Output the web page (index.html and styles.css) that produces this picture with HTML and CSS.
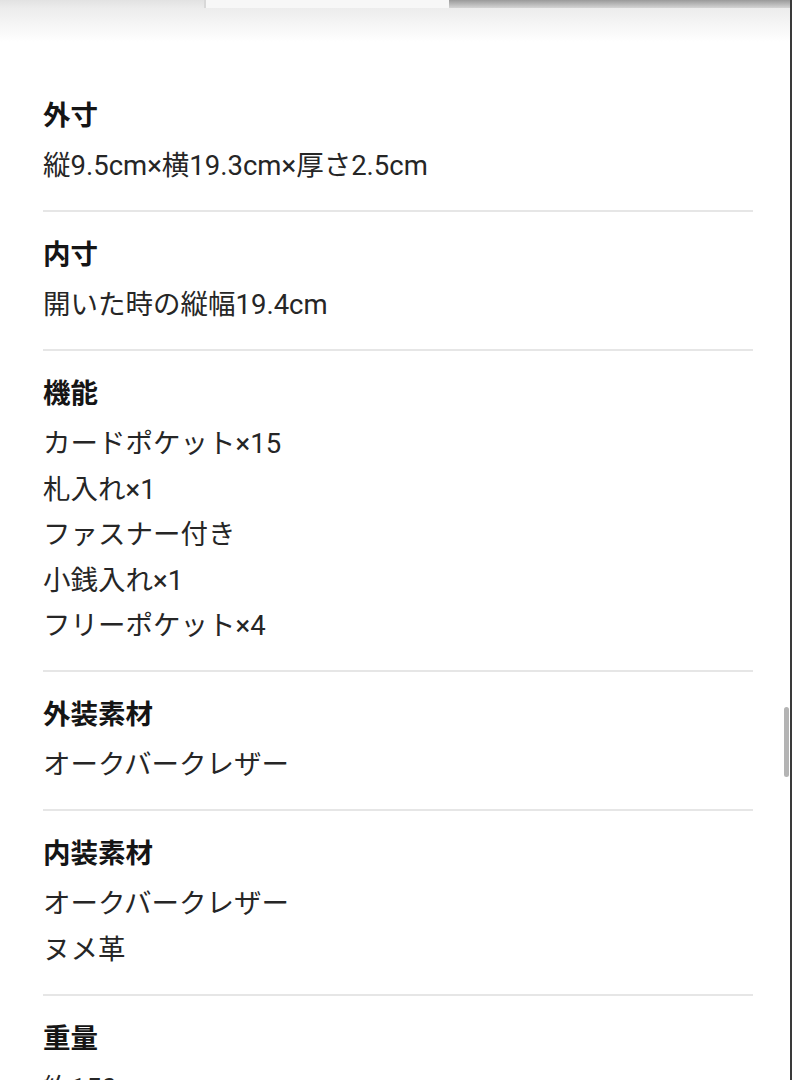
FILE: index.html
```html
<!DOCTYPE html>
<html lang="ja">
<head>
<meta charset="utf-8">
<link rel="stylesheet" href="styles.css">
</head>
<body>
<div class="frame">
  <div class="topbar">
    <div class="tab tab-a"></div>
    <div class="tab tab-b"></div>
    <div class="tab tab-c"></div>
  </div>
  <div class="shade"></div>
  <main class="specs">
    <section class="spec">
      <h2 class="label">外寸</h2>
      <p class="value">縦9.5cm×横19.3cm×厚さ2.5cm</p>
    </section>
    <section class="spec">
      <h2 class="label">内寸</h2>
      <p class="value">開いた時の縦幅19.4cm</p>
    </section>
    <section class="spec">
      <h2 class="label">機能</h2>
      <p class="value">カードポケット×15</p>
      <p class="value">札入れ×1</p>
      <p class="value">ファスナー付き</p>
      <p class="value">小銭入れ×1</p>
      <p class="value">フリーポケット×4</p>
    </section>
    <section class="spec">
      <h2 class="label">外装素材</h2>
      <p class="value">オークバークレザー</p>
    </section>
    <section class="spec">
      <h2 class="label">内装素材</h2>
      <p class="value">オークバークレザー</p>
      <p class="value">ヌメ革</p>
    </section>
    <section class="spec">
      <h2 class="label">重量</h2>
      <p class="value">約150g</p>
    </section>
  </main>
  <div class="scrollbar"></div>
</div>
</body>
</html>
```

FILE: styles.css
```css
html, body {
  margin: 0;
  padding: 0;
  background: #ffffff;
}
body {
  font-family: Roboto, "Noto Sans CJK JP", "Noto Sans", sans-serif;
  color: #222222;
  overflow: hidden;
}
.frame {
  position: relative;
  width: 790px;
  height: 1080px;
  border-right: 2px solid #3a3a3a;
  overflow: hidden;
}
.topbar {
  display: flex;
  height: 8px;
}
.tab-a {
  width: 204px;
  background: linear-gradient(#e2e2e2, #ececec);
  border-right: 2px solid #d8d8d8;
}
.tab-b {
  width: 243px;
  background: #f7f7f7;
}
.tab-c {
  flex: 1;
  background: linear-gradient(#9a9a9a, #d4d4d4);
}
.shade {
  height: 34px;
  background: linear-gradient(#ececec, #ffffff);
}
.specs {
  padding: 31px 37px 0 43px;
}
.spec {
  padding: 23px 0 21.5px;
  border-bottom: 2px solid #e6e6e6;
}
.label {
  margin: 0 0 7px;
  font-size: 27.5px;
  line-height: 40px;
  font-weight: 700;
  color: #151515;
}
.value {
  margin: 0;
  font-size: 27.5px;
  line-height: 45.5px;
  font-weight: 400;
  color: #262626;
}
.scrollbar {
  position: absolute;
  right: 1px;
  top: 707px;
  width: 5px;
  height: 70px;
  border-radius: 3px;
  background: #b4b4b4;
}
```
